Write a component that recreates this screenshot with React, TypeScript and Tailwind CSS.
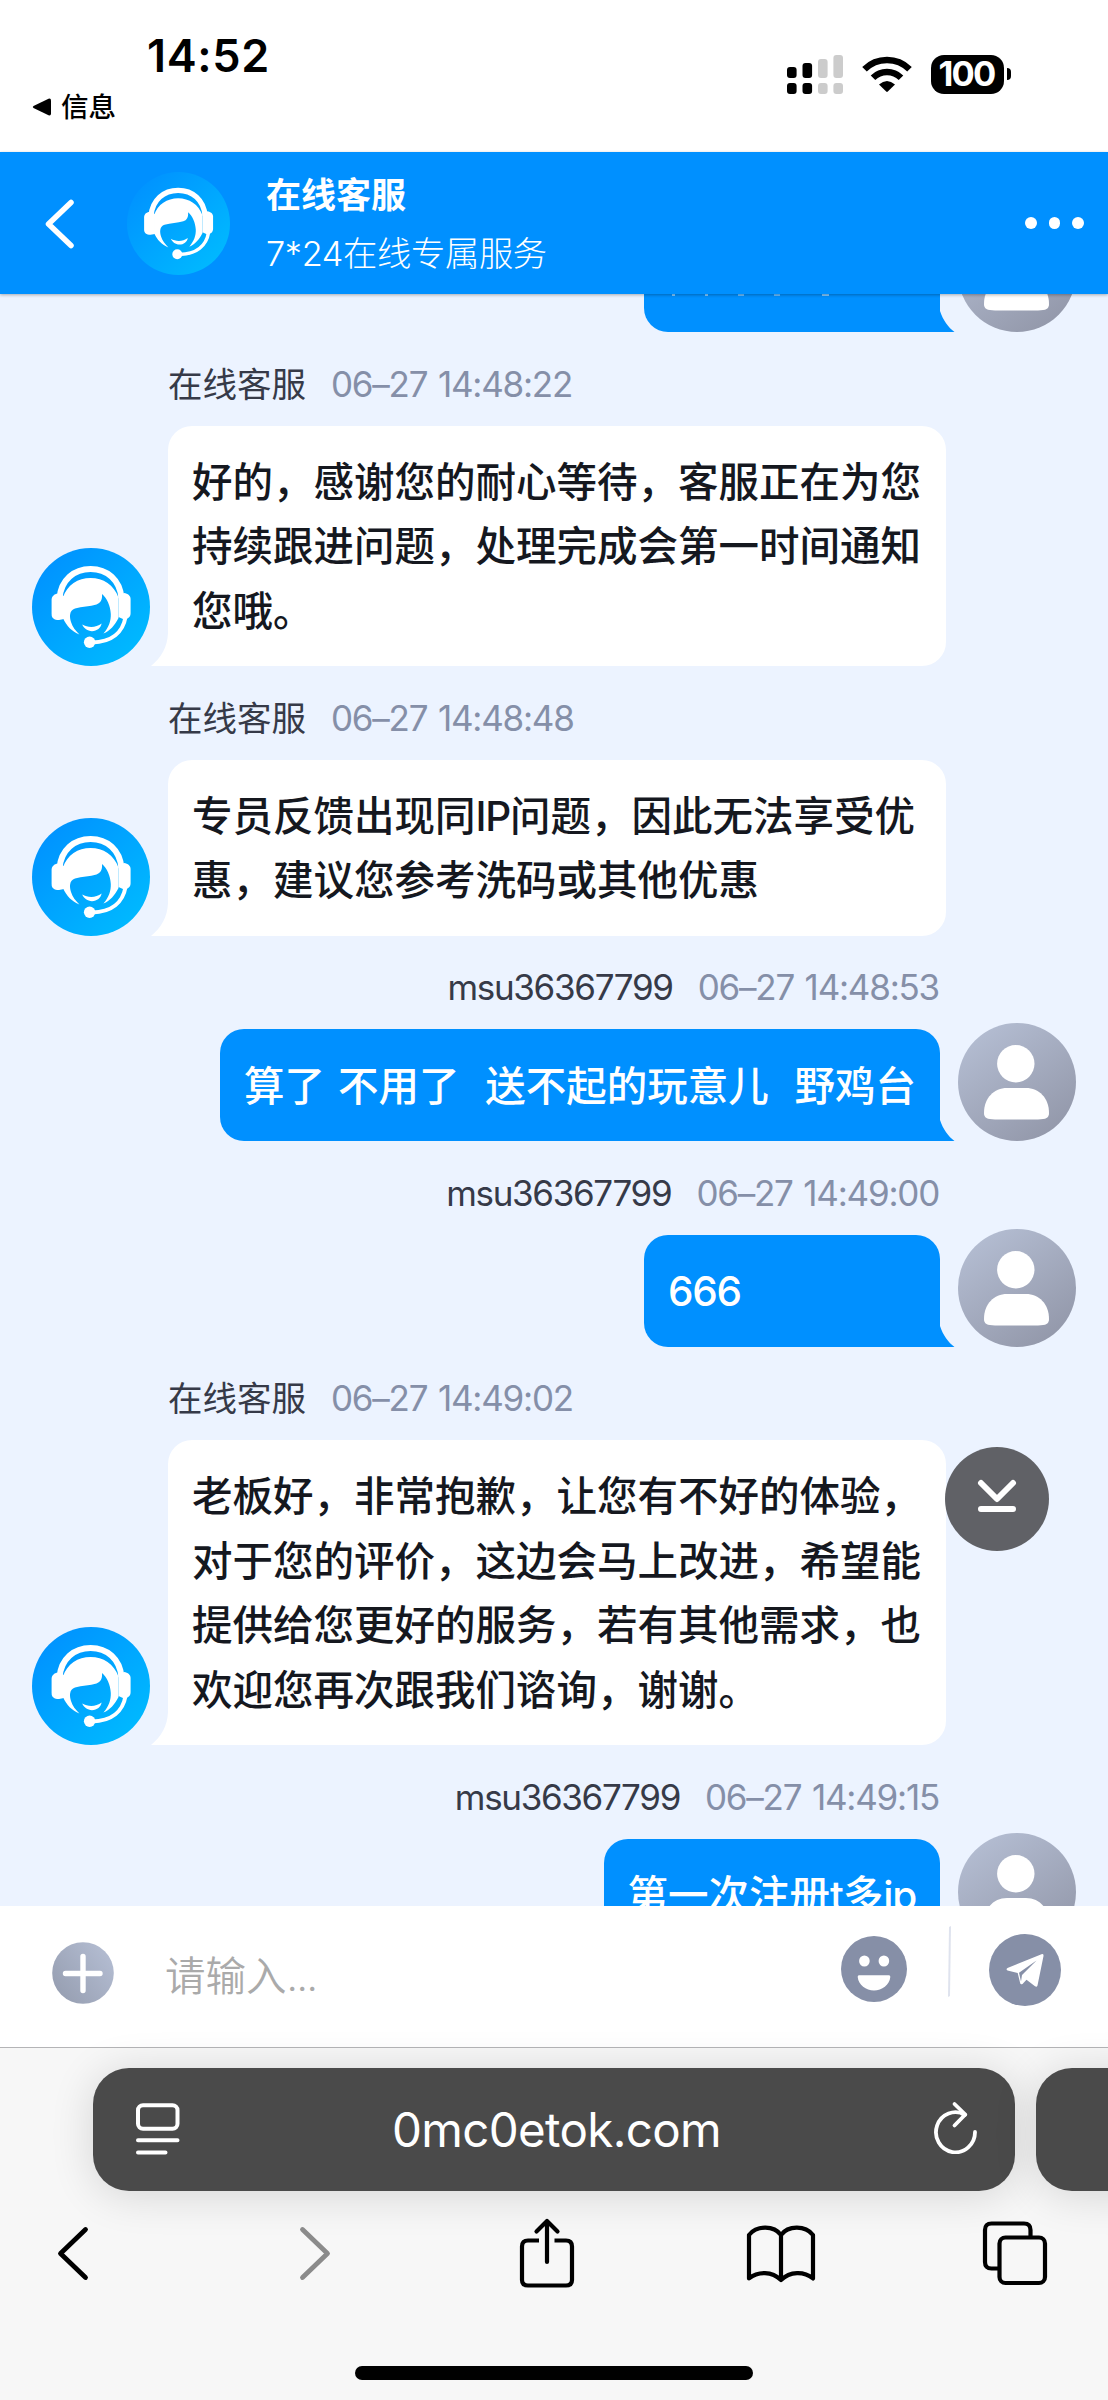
import { ReactNode } from "react";

type Message = {
  from: "agent" | "user";
  time: string;
  lines: string[];
};

const AGENT_NAME = "在线客服";
const USER_NAME = "msu36367799";

const messages: Message[] = [
  { from: "agent", time: "06–27 14:48:22", lines: ["好的，感谢您的耐心等待，客服正在为您", "持续跟进问题，处理完成会第一时间通知", "您哦。"] },
  { from: "agent", time: "06–27 14:48:48", lines: ["专员反馈出现同IP问题，因此无法享受优", "惠，建议您参考洗码或其他优惠"] },
  { from: "user", time: "06–27 14:48:53", lines: ["算了 不用了  送不起的玩意儿  野鸡台"] },
  { from: "user", time: "06–27 14:49:00", lines: ["666"] },
  {
    from: "agent",
    time: "06–27 14:49:02",
    lines: ["老板好，非常抱歉，让您有不好的体验，", "对于您的评价，这边会马上改进，希望能", "提供给您更好的服务，若有其他需求，也", "欢迎您再次跟我们谘询，谢谢。"],
  },
  { from: "user", time: "06–27 14:49:15", lines: ["第一次注册t多ip"] },
];

const AgentAvatar = ({ className }: { className: string }) => (
  <svg viewBox="0 0 118 118" className={className}>
    <defs>
      <linearGradient id="agent" x1="0.1" y1="0.1" x2="0.9" y2="0.9">
        <stop offset="0" stopColor="#0092ff" />
        <stop offset="1" stopColor="#00baff" />
      </linearGradient>
    </defs>
    <circle cx="59" cy="59" r="59" fill="url(#agent)" />
    <path d="M27.6 50C29 32 42 21 58.6 21S88 32 89.4 50" fill="none" stroke="#fff" strokeWidth="6" />
    <path
      d="M31 49.500C35 37 46 30 58.600 30S82 37 86.500 49.500V70C83 77 78 83 71.400 85.600C77 79 79 73 78.800 66C78.400 58 75 50 70 46C70.500 52 68.500 55 64.500 56.500C58 58.500 50 58.500 43 60.500C37 62.500 37.500 69 39 74C40.500 79 43.500 82.500 47.400 86.500C40 83.500 34.500 78 31 70Z"
      fill="#fff"
    />
    <path d="M26 45.500L32 48V71L27 72C22 72 19.600 70 19.600 66V52C19.600 48.500 22 46 26 45.500Z" fill="#fff" />
    <path d="M92 45L86.500 48V69L92 71.500C96 71 98.600 69 98.600 65V51C98.600 48 96 45.500 92 45Z" fill="#fff" />
    <path d="M93.500 69C91 84 80 94 60 94.500" fill="none" stroke="#fff" strokeWidth="4" />
    <circle cx="57.600" cy="94.300" r="5.700" fill="#fff" />
    <path d="M50.200 76.600C56 80 64 80 69.600 75.600C69 80 65 83.200 60 83.200C55.500 83.200 52 80.500 50.200 76.600Z" fill="#fff" />
  </svg>
);

const UserAvatar = () => (
  <svg viewBox="0 0 118 118" className="size-[118px] shrink-0">
    <defs>
      <linearGradient id="user" x1="0.2" y1="0.1" x2="0.8" y2="0.95">
        <stop offset="0" stopColor="#b2bbd0" />
        <stop offset="1" stopColor="#9398aa" />
      </linearGradient>
    </defs>
    <circle cx="59" cy="59" r="59" fill="url(#user)" />
    <circle cx="57.800" cy="40.700" r="18.700" fill="#fff" />
    <path d="M26 90C26 75 36 65 49 65H68C81 65 91 75 91 90C91 95 88 96.300 80 96.500H37C29 96.300 26 95 26 90Z" fill="#fff" />
  </svg>
);

const Bubble = ({ from, children }: { from: Message["from"]; children: ReactNode }) =>
  from === "agent" ? (
    <div className="relative w-[778px] rounded-3xl rounded-bl-none bg-white px-6 pt-[25.2px] pb-[22.2px] text-[#15181f]">
      <svg viewBox="0 0 18 33" className="absolute bottom-0 -left-[17px] h-[33px] w-[18px]">
        <path d="M18 0H17C16.500 14 10 25 0 33H18Z" fill="#fff" />
      </svg>
      {children}
    </div>
  ) : (
    <div className="relative min-w-[296px] rounded-3xl rounded-br-none bg-[#0090ff] px-6 pt-[25.2px] pb-[22.2px] text-white">
      <svg viewBox="0 0 16 21" className="absolute -right-[15px] bottom-0 h-[21px] w-4">
        <path d="M0 0H1C4 9 9 16 15.500 21H0Z" fill="#0090ff" />
      </svg>
      {children}
    </div>
  );

const MessageRow = ({ from, time, lines }: Message) => {
  const body = lines.map((line) => (
    <p key={line} className="h-[64.4px] text-[40.5px] leading-[64.4px] font-medium [word-spacing:2.1px] whitespace-pre">
      {line.split(/([A-Za-z0-9]+)/).map((part, i) => (
        <span key={i} className={i % 2 ? "tracking-[-0.03em]" : ""}>{part}</span>
      ))}
    </p>
  ));
  const meta = (
    <div className={from === "agent" ? "mb-[17.6px] flex gap-[25px] pt-[28.6px]" : "mb-[17.6px] flex justify-end gap-[25px] pt-[28.6px]"}>
      {from === "agent" ? (
        <span className="text-[34.5px] leading-[47.4px] text-[#363a48]">{AGENT_NAME}</span>
      ) : (
        <span className="text-[35px] leading-[47.4px] tracking-[-0.038em] text-[#363a48]">{USER_NAME}</span>
      )}
      <span
        className={
          from === "agent"
            ? "text-[35px] leading-[47.4px] tracking-[-0.035em] [word-spacing:2px] text-[#858fa8]"
            : "pr-[1px] text-[35px] leading-[47.4px] tracking-[-0.035em] [word-spacing:2px] text-[#858fa8]"
        }
      >
        {time}
      </span>
    </div>
  );

  if (from === "agent") {
    return (
      <div className="flex items-end pl-8">
        <AgentAvatar className="mr-[18px] size-[118px] shrink-0" />
        <div>
          {meta}
          <Bubble from={from}>{body}</Bubble>
        </div>
      </div>
    );
  }
  return (
    <div className="flex items-end justify-end pr-8">
      <div className="mr-[18px] flex flex-col items-end">
        {meta}
        <Bubble from={from}>{body}</Bubble>
      </div>
      <UserAvatar />
    </div>
  );
};

const StatusBar = () => (
  <div className="flex h-[152px] shrink-0 justify-between bg-white pr-[97px] pl-8 text-black">
    <div className="flex flex-col">
      <span className="mt-[29px] pl-[115px] text-[45px] leading-[54px] font-semibold tracking-[0.015em]">14:52</span>
      <span className="mt-[8px] flex items-center gap-[10px] text-[27.5px] leading-8 font-medium">
        <svg viewBox="0 0 19 18" className="h-[18px] w-[19px]">
          <path d="M1.500 8L16.500 .7Q19 0 19 2.500V15.500Q19 18 16.500 17.300L1.500 10Q0 9 1.500 8Z" />
        </svg>
        信息
      </span>
    </div>
    <div className="mt-[55px] flex h-[39px]">
      <svg viewBox="0 0 57 39" className="h-[39px] w-[57px]">
        <g fill="#000">
          <rect x="0" y="12" width="9.600" height="11" rx="3" />
          <rect x="15.500" y="8" width="9.600" height="15" rx="3" />
          <rect x="0" y="28" width="9.600" height="11" rx="3" />
          <rect x="15.500" y="28" width="9.600" height="11" rx="3" />
        </g>
        <g fill="#ccc">
          <rect x="31" y="4" width="9.600" height="19" rx="3" />
          <rect x="46.400" y="0" width="9.600" height="23" rx="3" />
          <rect x="31" y="28" width="9.600" height="11" rx="3" />
          <rect x="46.400" y="28" width="9.600" height="11" rx="3" />
        </g>
      </svg>
      <svg viewBox="0 0 50 39" className="ml-[18px] h-[39px] w-[50px]">
        <g fill="none" stroke="#000" strokeWidth="6.500">
          <path d="M2.500 14.300A32 32 0 0 1 47.500 14.300" />
          <path d="M11 22.800A20 20 0 0 1 39 22.800" />
        </g>
        <path d="M17 29.500Q25 22.500 33 29.500L25.800 36.600Q25 37.300 24.200 36.600Z" />
      </svg>
      <div className="ml-[19px] flex h-[39px] w-[73px] items-center justify-center rounded-[13px] bg-black pr-[2px] text-[34.5px] leading-none font-bold tracking-[-0.05em] text-white">
        100
      </div>
      <div className="mt-[13px] ml-[3px] h-3 w-1 rounded-r-full bg-black" />
    </div>
  </div>
);

const ChatHeader = () => (
  <div className="relative flex h-[142px] shrink-0 items-center bg-[#0090ff] pr-6 text-white shadow-[0_1px_3px_rgba(0,0,0,0.3)]">
    <svg viewBox="0 0 30 50" className="mt-[2px] ml-[45px] h-[50px] w-[30px]">
      <path d="M26 3.500L3.500 25L26 46.500" fill="none" stroke="#fff" strokeWidth="5.500" strokeLinecap="round" strokeLinejoin="round" />
    </svg>
    <AgentAvatar className="ml-[52px] size-[103px]" />
    <div className="ml-9 grow pt-[3px]">
      <p className="text-[35px] leading-[52px] font-bold">{AGENT_NAME}</p>
      <p className="mt-[7px] text-[34.3px] leading-[52px] font-light tracking-[-0.01em]">7*24在线专属服务</p>
    </div>
    <div className="flex gap-3">
      <span className="size-[11.6px] rounded-full bg-white" />
      <span className="size-[11.6px] rounded-full bg-white" />
      <span className="size-[11.6px] rounded-full bg-white" />
    </div>
  </div>
);

const InputBar = () => (
  <div className="flex h-[141px] shrink-0 bg-white">
    <svg viewBox="0 0 62 62" className="mt-9 ml-[52px] size-[62px]">
      <defs>
        <linearGradient id="plus" x1="0.1" y1="0.8" x2="0.9" y2="0.2">
          <stop offset="0" stopColor="#98a0b3" />
          <stop offset="1" stopColor="#b2bbd0" />
        </linearGradient>
      </defs>
      <circle cx="31" cy="31" r="30.800" fill="url(#plus)" />
      <path d="M31 14.500V48.500M13.500 31.500H48" stroke="#fff" strokeWidth="5.400" strokeLinecap="round" />
    </svg>
    <span className="mt-[44px] ml-[51px] grow text-[40.5px] leading-[54px] font-[350] text-[#aaa]">
      请输入<span className="tracking-[-0.035em]">...</span>
    </span>
    <svg viewBox="0 0 66 66" className="mt-[30px] size-[66px]">
      <circle cx="33" cy="33" r="33" fill="#868fa7" />
      <ellipse cx="23.400" cy="25" rx="5.300" ry="5.600" fill="#fff" />
      <ellipse cx="42.900" cy="25" rx="5.300" ry="5.600" fill="#fff" />
      <path d="M18 39.300H48Q49.500 39.300 49.300 41C48.500 49 41 54.500 33 54.500S17.500 49 16.700 41Q16.500 39.300 18 39.300Z" fill="#fff" />
    </svg>
    <svg viewBox="0 0 4 72" className="mt-5 ml-[40px] h-[72px] w-1">
      <path d="M2 1L4 0L3 70L1 71Z" fill="#dfe3ee" />
    </svg>
    <svg viewBox="0 0 72 72" className="mt-[27.500px] mr-[47px] ml-[38px] size-[72px]">
      <circle cx="36" cy="36" r="36" fill="#868fa7" />
      <path
        d="M18.500 34L52.500 20.200Q54.800 19.700 54.500 22L48.500 51.500Q47.800 53.500 46 52.300L37.500 45.700L33.500 50Q31.500 51.200 31 48.500L28.700 39L18.500 36.500Q16.500 35.300 18.500 34ZM47.500 26.500L30 38.800L32 47.500L33 41Z"
        fill="#fff"
        fillRule="evenodd"
      />
    </svg>
  </div>
);

const BrowserBar = () => (
  <div className="flex grow flex-col border-t border-[#b4b4b6] bg-[#f7f7f7]">
    <div className="flex pt-5 pl-[93px]">
      <div className="flex h-[123px] w-[922px] shrink-0 items-center rounded-[36px] bg-[#4a4a4a] pr-[37px] pl-[43px] text-white shadow-[0_4px_44px_rgba(0,0,0,0.14)]">
        <svg viewBox="0 0 44 54" className="h-[54px] w-11" fill="none" stroke="#fff" strokeWidth="4" strokeLinecap="round">
          <rect x="2" y="2.200" width="39.500" height="23.500" rx="5" />
          <path d="M2 37.200H41.500M2 49.500H29.500" />
        </svg>
        <span className="grow pr-[1px] text-center text-[47.500px] leading-[60px] tracking-[-0.014em]">0mc0etok.com</span>
        <svg viewBox="0 0 44 56" className="mb-[7px] h-14 w-11" fill="none" stroke="#fff" strokeWidth="3.800" strokeLinecap="round" strokeLinejoin="round">
          <path d="M41 34A19.500 20 0 1 1 31 16.800L28 15.800" />
          <path d="M20.500 6L31.300 16.500L20.500 27.500" />
        </svg>
      </div>
      <div className="ml-[21px] h-[123px] w-[200px] shrink-0 rounded-[36px] bg-[#4a4a4a] shadow-[0_4px_44px_rgba(0,0,0,0.14)]" />
    </div>
    <div className="relative mt-6 flex h-[76px] items-center pl-[56px]">
      <svg viewBox="0 0 34 56" className="h-14 w-[34px]" fill="none" stroke="#000" strokeWidth="4.800" strokeLinecap="round" strokeLinejoin="round">
        <path d="M29.500 4.500L4.500 28.500L29.500 52.500" />
      </svg>
      <svg viewBox="0 0 34 56" className="ml-[208px] h-14 w-[34px]" fill="none" stroke="#8b8b8b" strokeWidth="4.800" strokeLinecap="round" strokeLinejoin="round">
        <path d="M4.500 4.500L29.500 28.500L4.500 52.500" />
      </svg>
      <svg viewBox="0 0 56 70" className="ml-[187px] h-[70px] w-14" fill="none" stroke="#000" strokeWidth="4.200" strokeLinejoin="round">
        <path d="M20 22.500H9Q3 22.500 3 28.500V62Q3 67.500 9 67.500H47Q53 67.500 53 62V28.500Q53 22.500 47 22.500H35.500" />
        <path d="M28 44V3M17.500 13.500L28 3L38.500 13.500" strokeLinecap="round" />
      </svg>
      <svg viewBox="0 0 70 62" className="ml-[171px] h-[62px] w-[70px]" fill="none" stroke="#000" strokeWidth="4.200" strokeLinejoin="round">
        <path d="M35 13C28 3.500 11 3 3 13V56.500C12 49 26 49 35 58C44 49 58 49 67 56.500V13C59 3 42 3.500 35 13V57" />
      </svg>
      <svg viewBox="0 0 68 66" className="ml-[166px] h-[66px] w-[68px]" fill="none" stroke="#000" strokeWidth="4.200">
        <rect x="17.500" y="17.500" width="45.500" height="45.500" rx="6" />
        <path d="M17.500 48.500H9.500Q3 48.500 3 42V10Q3 3.500 9.500 3.500H42Q48.500 3.500 48.500 10V17.500" />
      </svg>
    </div>
    <div className="mt-[75px] ml-[355px] h-[14px] w-[398px] rounded-full bg-black" />
  </div>
);

const App = () => (
  <div className="flex h-[2400px] w-[1108px] flex-col overflow-hidden bg-white font-['Inter','Noto_Sans_CJK_SC',sans-serif]" lang="zh-CN">
    <StatusBar />
    <div className="relative z-10 shrink-0">
      <ChatHeader />
    </div>
    <div className="relative h-[1612px] shrink-0 overflow-hidden bg-[#ecf3ff]">
      {/* scrolled so that the oldest message is mostly under the header */}
      <div className="-mt-[80px] flex items-end justify-end pr-8">
        <div className="mr-[18px]">
          <Bubble from="user">
            <div className="flex h-[64.4px] items-end gap-[30px] pb-[14px] pl-1">
              <span className="h-[2px] w-[3px] bg-white/50" />
              <span className="h-[2px] w-[3px] bg-white/50" />
              <span className="h-[2px] w-[6px] bg-white/40" />
              <span className="h-[2px] w-[6px] bg-white/40" />
              <span className="ml-3 h-[2px] w-[7px] bg-white/50" />
            </div>
          </Bubble>
        </div>
        <UserAvatar />
      </div>
      {messages.map((message) => (
        <MessageRow key={message.time} {...message} />
      ))}
      <button className="absolute top-[1153px] left-[945px] flex size-[104px] items-center justify-center rounded-full bg-[#606166]">
        <svg viewBox="0 0 40 36" className="mb-[7px] h-9 w-10" fill="none" stroke="#fff" strokeWidth="6" strokeLinecap="round" strokeLinejoin="round">
          <path d="M4 5L20 21L36 5M4 31H36" />
        </svg>
      </button>
    </div>
    <InputBar />
    <BrowserBar />
  </div>
);

export default App;
